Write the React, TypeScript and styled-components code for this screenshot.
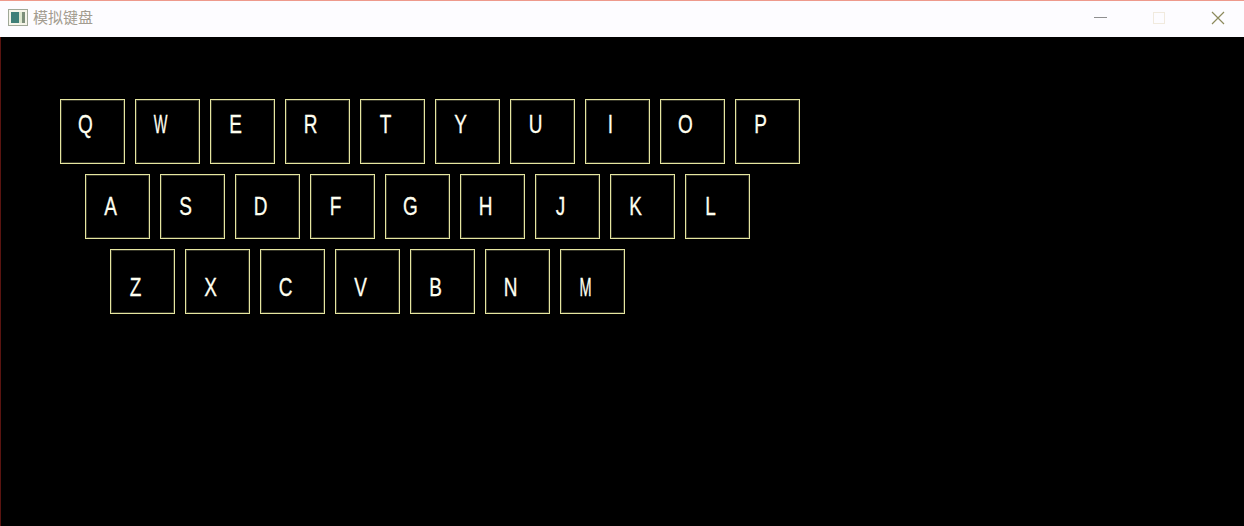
import React from "react";
import styled, { createGlobalStyle } from "styled-components";

const Global = createGlobalStyle`
  html, body { margin: 0; padding: 0; background: #000; }
  #root { width: 1244px; height: 526px; overflow: hidden; }
`;

const Window = styled.div`
  width: 1244px;
  height: 526px;
  display: flex;
  flex-direction: column;
  background: #000;
  border-left: 1px solid #5a1410;
  box-sizing: border-box;
`;

const TitleBar = styled.div`
  height: 37px;
  margin-left: -1px;
  box-sizing: border-box;
  flex: none;
  display: flex;
  align-items: flex-start;
  background: #fdfcff;
  border-top: 1px solid #ee9a8c;
`;

const AppIcon = styled.svg`
  width: 20px;
  height: 17px;
  margin: 8px 0 0 8px;
  flex: none;
`;

const Title = styled.span`
  margin: 5px 0 0 5px;
  font: 15px/22px "Noto Sans CJK SC", sans-serif;
  color: #a39c90;
  flex: 1;
`;

const Control = styled.svg<{ $w: number }>`
  width: ${(p) => p.$w}px;
  height: 36px;
  flex: none;
`;

const Keyboard = styled.div`
  display: flex;
  flex-direction: column;
  gap: 10px;
  padding-top: 62px;
`;

const Row = styled.div<{ $indent: number }>`
  display: flex;
  gap: 10px;
  padding-left: ${(p) => p.$indent}px;
`;

const Key = styled.div<{ $textTop: number }>`
  width: 65px;
  height: 65px;
  box-sizing: border-box;
  border: 1px solid #e6e6a0;
  box-shadow: inset 0 0 0 1px rgba(150, 150, 110, 0.35);
  padding-top: ${(p) => p.$textTop + 1}px;
`;

const Glyph = styled.div<{ $wide: boolean }>`
  width: 49px;
  text-align: center;
  font: 25px/30px "Liberation Sans", sans-serif;
  color: #fffff0;
  -webkit-text-stroke: 0.3px #fffff0;
  transform: scaleX(${(p) => (p.$wide ? 0.58 : 0.76)});
`;

const rows: { indent: number; keys: string; textTop: number }[] = [
  { indent: 59, keys: "QWERTYUIOP", textTop: 8 },
  { indent: 84, keys: "ASDFGHJKL", textTop: 15 },
  { indent: 109, keys: "ZXCVBNM", textTop: 21 },
];

export default function App() {
  return (
    <>
      <Global />
      <Window>
        <TitleBar>
          <AppIcon viewBox="0 0 20 17">
            <rect x="0.5" y="0.5" width="19" height="16" fill="#f6f5ea" stroke="#a0a898" />
            <rect x="3" y="3" width="8" height="11" fill="#3f7f78" />
            <rect x="11" y="3" width="3" height="11" fill="#dfe8d0" />
            <rect x="14" y="3" width="3" height="11" fill="#7d8f7a" />
          </AppIcon>
          <Title>模拟键盘</Title>
          <Control $w={58} viewBox="0 0 58 36">
            <path d="M 22 16.5 H 35" stroke="#8f8f8f" strokeWidth="1" />
          </Control>
          <Control $w={58} viewBox="0 0 58 36">
            <rect x="23.5" y="11.5" width="11" height="11" fill="none" stroke="#e4d9bd" strokeWidth="1" strokeDasharray="1 1" />
          </Control>
          <Control $w={56} viewBox="0 0 56 36">
            <path d="M 24 11 L 36 23 M 36 11 L 24 23" stroke="#8c8a5c" strokeWidth="1.2" fill="none" />
          </Control>
        </TitleBar>
        <Keyboard>
          {rows.map((r) => (
            <Row key={r.indent} $indent={r.indent}>
              {r.keys.split("").map((k) => (
                <Key key={k} $textTop={r.textTop}>
                  <Glyph $wide={k === "W" || k === "M"}>{k}</Glyph>
                </Key>
              ))}
            </Row>
          ))}
        </Keyboard>
      </Window>
    </>
  );
}
